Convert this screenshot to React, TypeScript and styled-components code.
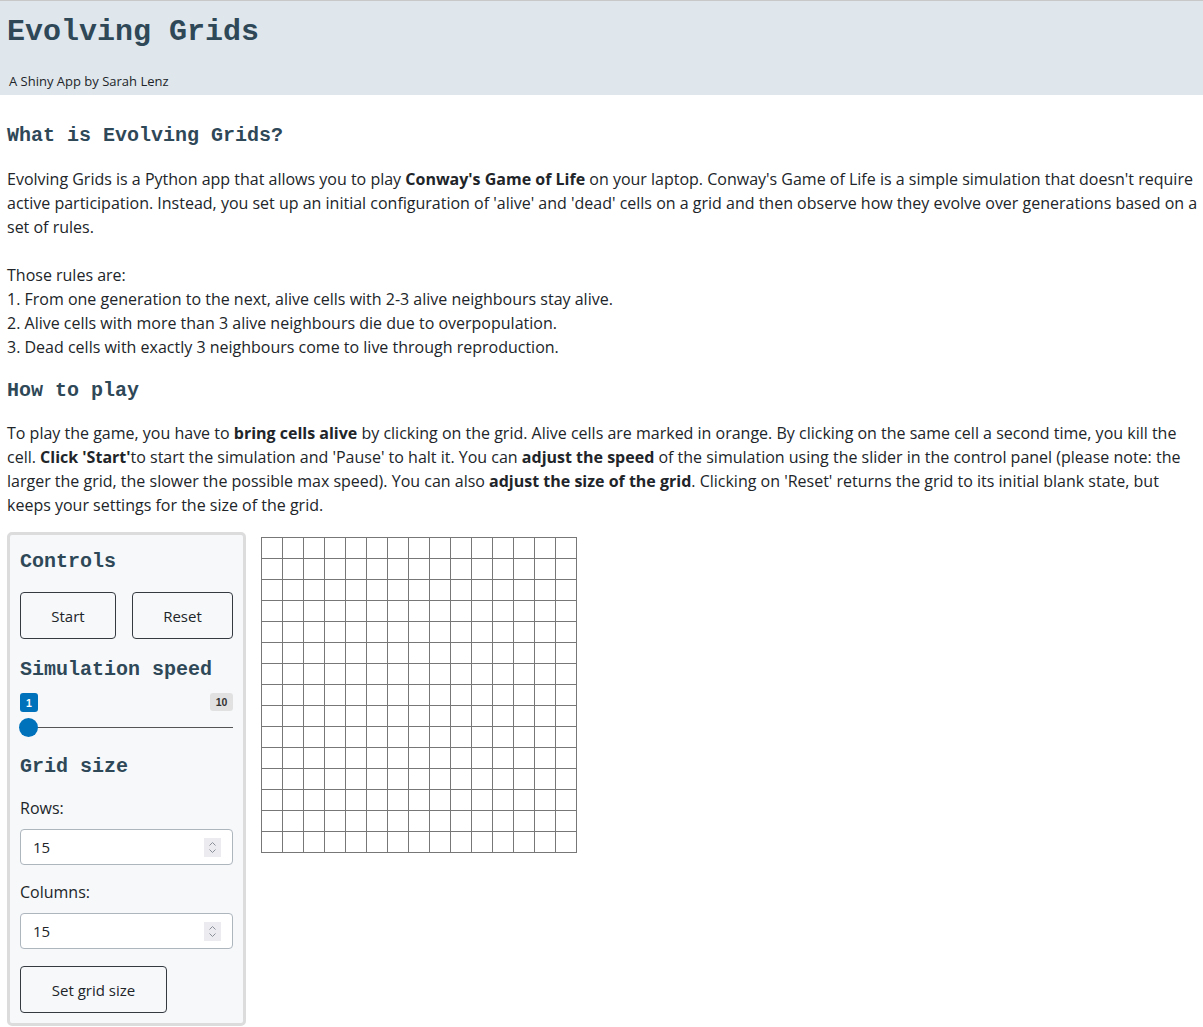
import React from "react";
import styled, { createGlobalStyle } from "styled-components";

const Global = createGlobalStyle`
  html, body { margin: 0; padding: 0; background: #fff; }
  body {
    font-family: "Open Sans", "Noto Sans", sans-serif;
    font-size: 16px;
    line-height: 24px;
    color: #212529;
    border-top: 1px solid #c8c8c8;
  }
  * { box-sizing: border-box; }
`;

const Header = styled.header`
  background: #dfe7ed;
  padding: 11px 7px 7px;
  height: 94px;
`;

const Title = styled.h1`
  margin: 0;
  font-family: "Liberation Mono", "Courier New", monospace;
  font-weight: 700;
  font-size: 30px;
  line-height: 40px;
  color: #2f4858;
`;

const Subtitle = styled.div`
  margin-top: 20px;
  padding-left: 2px;
  font-size: 13px;
  line-height: 18px;
  color: #212529;
`;

const Main = styled.main`
  padding: 0 0 0 7px;
`;

const SectionTitle = styled.h3<{ $top: number; $bottom: number }>`
  margin: 0;
  font-family: "Liberation Mono", "Courier New", monospace;
  font-weight: 700;
  font-size: 20px;
  line-height: 24px;
  color: #2f4858;
  padding-top: ${(p) => p.$top}px;
  padding-bottom: ${(p) => p.$bottom}px;
`;

const Para = styled.p<{ $gap?: number }>`
  margin: 0 0 ${(p) => p.$gap ?? 0}px;
`;

const Layout = styled.div`
  display: flex;
  align-items: flex-start;
  gap: 15px;
  margin-top: 15px;
`;

const Panel = styled.aside`
  width: 239px;
  flex: none;
  background: #f6f8fa;
  border: 3px solid #dcdcdc;
  border-radius: 5px;
  padding: 14px 10px 0;
`;

const PanelTitle = styled.h4`
  margin: 0;
  font-family: "Liberation Mono", "Courier New", monospace;
  font-weight: 700;
  font-size: 20px;
  line-height: 26px;
  color: #2f4858;
`;

const ButtonRow = styled.div<{ $top: number; $bottom: number }>`
  display: flex;
  gap: 16px;
  margin: ${(p) => p.$top}px 0 ${(p) => p.$bottom}px;
`;

const Btn = styled.button<{ $w: number }>`
  width: ${(p) => p.$w}px;
  height: 47px;
  background: transparent;
  border: 1px solid #343a40;
  border-radius: 4px;
  font-family: "Open Sans", "Noto Sans", sans-serif;
  font-size: 15px;
  color: #212529;
  padding: 0;
`;

const SliderBlock = styled.div`
  margin: 10px 0 26px;
`;

const SliderLabels = styled.div`
  display: flex;
  justify-content: space-between;
  align-items: flex-start;
  height: 19px;
`;

const Badge = styled.span<{ $active?: boolean }>`
  display: inline-flex;
  align-items: center;
  justify-content: center;
  min-width: ${(p) => (p.$active ? 18 : 23)}px;
  height: ${(p) => (p.$active ? 19 : 18)}px;
  padding: 0 3px;
  border-radius: 3px;
  font-family: "Liberation Sans", Arial, sans-serif;
  font-weight: 700;
  font-size: 10.5px;
  background: ${(p) => (p.$active ? "#0072bc" : "#e1e1e1")};
  color: ${(p) => (p.$active ? "#fff" : "#333")};
`;

const Track = styled.div`
  position: relative;
  height: 1px;
  background: #555;
  margin-top: 15px;
  margin-left: 8px;
`;

const Thumb = styled.span`
  position: absolute;
  left: -9px;
  top: -9px;
  width: 19px;
  height: 19px;
  border-radius: 50%;
  background: #0072bc;
`;

const FieldLabel = styled.label<{ $top: number }>`
  display: block;
  margin: ${(p) => p.$top}px 0 9px;
  font-size: 16px;
  line-height: 24px;
`;

const InputBox = styled.div`
  display: flex;
  align-items: center;
  justify-content: space-between;
  height: 36px;
  background: #fff;
  border: 1px solid #adb5bd;
  border-radius: 4px;
  padding: 0 11px 0 12px;
  font-size: 15px;
`;

const Spinner = styled.span`
  display: inline-flex;
  align-items: center;
  justify-content: center;
  width: 17px;
  height: 19px;
  background: #ececf0;
`;

const GridWrap = styled.div`
  margin-top: 5px;
  display: grid;
  grid-template-columns: repeat(15, 20px);
  grid-auto-rows: 20px;
  gap: 1px;
  padding: 1px;
  background: #777;
`;

const Cell = styled.div`
  background: #fff;
`;

const SpinIcon = () => (
  <svg width="9" height="13" viewBox="0 0 9 13">
    <path d="M1.5 4.5 L4.5 1.5 L7.5 4.5" fill="none" stroke="#8a8f98" strokeWidth="1" />
    <path d="M1.5 8.5 L4.5 11.5 L7.5 8.5" fill="none" stroke="#8a8f98" strokeWidth="1" />
  </svg>
);

export default function App() {
  return (
    <>
      <Global />
      <Header>
        <Title>Evolving Grids</Title>
        <Subtitle>A Shiny App by Sarah Lenz</Subtitle>
      </Header>
      <Main>
        <SectionTitle $top={29} $bottom={19}>What is Evolving Grids?</SectionTitle>
        <Para $gap={24}>
          Evolving Grids is a Python app that allows you to play <b>Conway's Game of Life</b> on your laptop. Conway's Game of Life is a simple simulation that doesn't require active participation. Instead, you set up an initial configuration of 'alive' and 'dead' cells on a grid and then observe how they evolve over generations based on a set of rules.
        </Para>
        <Para>
          Those rules are:
          <br />
          1. From one generation to the next, alive cells with 2-3 alive neighbours stay alive.
          <br />
          2. Alive cells with more than 3 alive neighbours die due to overpopulation.
          <br />
          3. Dead cells with exactly 3 neighbours come to live through reproduction.
        </Para>
        <SectionTitle $top={20} $bottom={18}>How to play</SectionTitle>
        <Para>
          To play the game, you have to <b>bring cells alive</b> by clicking on the grid. Alive cells are marked in orange. By clicking on the same cell a second time, you kill the cell. <b>Click 'Start'</b>to start the simulation and 'Pause' to halt it. You can <b>adjust the speed</b> of the simulation using the slider in the control panel (please note: the larger the grid, the slower the possible max speed). You can also <b>adjust the size of the grid</b>. Clicking on 'Reset' returns the grid to its initial blank state, but keeps your settings for the size of the grid.
        </Para>
        <Layout>
          <Panel>
            <PanelTitle>Controls</PanelTitle>
            <ButtonRow $top={17} $bottom={18}>
              <Btn $w={96}>Start</Btn>
              <Btn $w={101}>Reset</Btn>
            </ButtonRow>
            <PanelTitle>Simulation speed</PanelTitle>
            <SliderBlock>
              <SliderLabels>
                <Badge $active>1</Badge>
                <Badge>10</Badge>
              </SliderLabels>
              <Track>
                <Thumb />
              </Track>
            </SliderBlock>
            <PanelTitle>Grid size</PanelTitle>
            <FieldLabel $top={16}>Rows:</FieldLabel>
            <InputBox>
              <span>15</span>
              <Spinner><SpinIcon /></Spinner>
            </InputBox>
            <FieldLabel $top={15}>Columns:</FieldLabel>
            <InputBox>
              <span>15</span>
              <Spinner><SpinIcon /></Spinner>
            </InputBox>
            <ButtonRow $top={17} $bottom={10}>
              <Btn $w={147}>Set grid size</Btn>
            </ButtonRow>
          </Panel>
          <GridWrap>
            {Array.from({ length: 225 }, (_, i) => (
              <Cell key={i} />
            ))}
          </GridWrap>
        </Layout>
      </Main>
    </>
  );
}
